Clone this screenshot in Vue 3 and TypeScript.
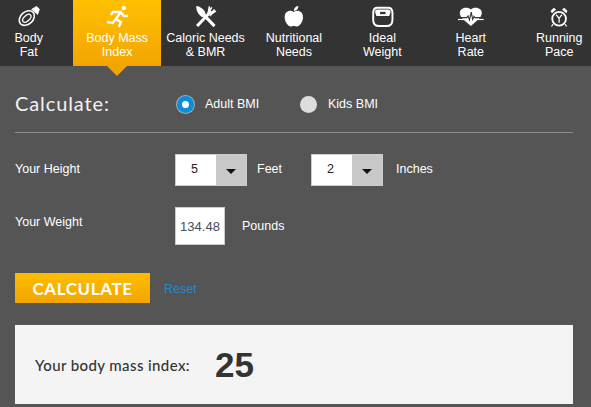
<script setup lang="ts">
const items = [
  { a: 'Body', b: 'Fat', icon: 'fat' },
  { a: 'Body Mass', b: 'Index', icon: 'run', active: true },
  { a: 'Caloric Needs', b: '& BMR', icon: 'food' },
  { a: 'Nutritional', b: 'Needs', icon: 'apple' },
  { a: 'Ideal', b: 'Weight', icon: 'scale' },
  { a: 'Heart', b: 'Rate', icon: 'heart' },
  { a: 'Running', b: 'Pace', icon: 'clock' },
]
</script>

<template>
  <div class="page">
    <nav class="nav">
      <div v-for="it in items" :key="it.a" class="item" :class="{ active: it.active }">
        <svg class="icon" viewBox="-2 0 28 24" aria-hidden="true">
          <g v-if="it.icon === 'fat'">
            <ellipse cx="9.800" cy="14.200" rx="9.300" ry="6.800" transform="rotate(-42 9.800 14.200)" fill="none" stroke="#fff" stroke-width="1.700" />
            <ellipse cx="9.800" cy="14.500" rx="5.400" ry="3" transform="rotate(-42 9.800 14.500)" fill="none" stroke="#fff" stroke-width="1.400" />
            <path d="M14.500 4.500 20.500 1.200 24 4.500 21.800 11z" fill="#fff" />
          </g>
          <g v-else-if="it.icon === 'run'">
            <circle cx="19.600" cy="3.400" r="2.400" fill="#fff" />
            <path d="M5.500 11 7.600 7.600h8.800l3.200 4.400H24M16.400 7.600 10.900 15.300l5.500 3.200L14.200 24M10.900 15.300 7.600 19.600 1.100 18.500" fill="none" stroke="#fff" stroke-width="2.600" stroke-linejoin="miter" />
          </g>
          <g v-else-if="it.icon === 'food'">
            <path d="M2.500 23 18 6.500" stroke="#fff" stroke-width="3.300" />
            <path d="M14.500 9 16 1.500M14.500 9l4-6.500M16.500 11l5-6M16.500 11 23 6.500M14 8l4 4" stroke="#fff" stroke-width="1.700" fill="none" />
            <path d="M21.500 23 9 10" stroke="#fff" stroke-width="3.300" />
            <path d="M1.500 1C7 1.500 11.500 6 12 11L9 13.500C4 11.500 1.500 6.500 1.500 1z" fill="#fff" />
          </g>
          <g v-else-if="it.icon === 'apple'">
            <path d="M12 7.500C8 5 2 6.500 2 13.500c0 5.500 4 10 6.500 10 1.500 0 2-.7 3.500-.7s2 .7 3.500.7c2.500 0 6.500-4.500 6.500-10 0-7-6-8.500-10-6z" fill="#fff" />
            <path d="M12 6.500c0-3 1.500-5 5-5.500 0 3-2 5-5 5.500z" fill="#fff" />
          </g>
          <g v-else-if="it.icon === 'scale'">
            <path d="M6 3h12q4 0 4.500 5v8q0 7-6.500 7H8q-6.500 0-6.500-7V8Q2 3 6 3z" fill="none" stroke="#fff" stroke-width="2.100" />
            <path d="M6 5h12q2.500 0 2.500 2.500L19 12H5L3.500 7.500Q3.500 5 6 5z" fill="#fff" />
            <rect x="9" y="7.500" width="6" height="2.500" fill="#333" />
          </g>
          <g v-else-if="it.icon === 'heart'">
            <path d="M12 23 3.500 15.500C-.5 11.500-1 7.500 1.500 5 4.500 2.500 9.500 2.500 12 5 14.500 2.500 19.500 2.500 22.500 5c2.500 2.500 2 6.500-2 10.500z" fill="#fff" />
            <path d="M-2 15.800H26" stroke="#fff" stroke-width="1.300" />
            <path d="M1 13.800h6.500l1.500-2 1.500 4.500 2-8.500 1.500 8 1.500-3.500 1 1.500H23" fill="none" stroke="#333" stroke-width="1.200" />
          </g>
          <g v-else>
            <circle cx="12.300" cy="15" r="7.500" fill="none" stroke="#fff" stroke-width="2" />
            <path d="M12.300 14.500 9 10.500M12.300 14.500l3-4M12.300 14.500v5" stroke="#fff" stroke-width="1.400" fill="none" />
            <path d="M3 6.500 6.500 3 9 5 4.500 9zM21.500 6.500 18 3 15.500 5 20 9z" fill="#fff" />
            <path d="M5.500 21l-1.500 2.500M19 21l1.500 2.500" stroke="#fff" stroke-width="1.400" />
          </g>
        </svg>
        <span class="lbl">{{ it.a }}<br />{{ it.b }}</span>
      </div>
    </nav>

    <main class="main">
      <div class="head">
        <h1 class="title">Calculate:</h1>
        <label class="radio"><span class="dot on"></span>Adult BMI</label>
        <label class="radio"><span class="dot"></span>Kids BMI</label>
      </div>
      <hr class="rule" />

      <div class="row height">
        <span class="name nudge">Your Height</span>
        <div class="select"><span class="val">5</span><span class="arrow"><i></i></span></div>
        <span class="unit feet nudge">Feet</span>
        <div class="select"><span class="val">2</span><span class="arrow"><i></i></span></div>
        <span class="unit inches nudge">Inches</span>
      </div>

      <div class="row weight">
        <span class="name up">Your Weight</span>
        <div class="input">134.48</div>
        <span class="unit pounds">Pounds</span>
      </div>

      <div class="actions">
        <button class="calc" type="button">CALCULATE</button>
        <a class="reset">Reset</a>
      </div>

      <section class="result">
        <span class="rtext">Your body mass index:</span>
        <strong class="rnum">25</strong>
      </section>
    </main>
  </div>
</template>

<style>
html, body { margin: 0; background: #555; }
</style>

<style scoped>
.page {
  width: 591px;
  height: 407px;
  overflow: hidden;
  background: #555;
  color: #fff;
  font-family: "Liberation Sans", Arial, sans-serif;
  font-size: 12.5px;
}
.nav {
  display: flex;
  width: 619px;
  height: 66px;
  margin-left: -15.5px;
  background: #333;
}
.item {
  position: relative;
  flex: 1 1 0;
  display: flex;
  flex-direction: column;
  align-items: center;
  padding-top: 5px;
  box-sizing: border-box;
  text-align: center;
}
.item.active { background: linear-gradient(#ffc000, #f2a500); }
.item.active::after {
  content: "";
  position: absolute;
  left: 50%;
  top: 66px;
  margin-left: -10px;
  border-left: 10px solid transparent;
  border-right: 10px solid transparent;
  border-top: 10px solid #f2a500;
}
.icon { width: 25.670px; height: 22px; display: block; overflow: visible; }
.lbl { display: block; margin-top: 4px; line-height: 14px; white-space: nowrap; }

.main { padding: 0 18px 0 15px; }
.head { display: flex; align-items: center; height: 38px; padding-top: 19px; }
.title {
  margin: -2px 0 0;
  width: 162px;
  flex: none;
  font-family: Lato, sans-serif;
  font-size: 20px;
  font-weight: 400;
  letter-spacing: .9px;
  color: #f2f2f2;
}
.radio { display: flex; align-items: center; gap: 11px; width: 123px; }
.dot {
  width: 17px;
  height: 17px;
  box-sizing: border-box;
  border-radius: 50%;
  background: #ddd;
}
.dot.on {
  background: #fff;
  border: 5px solid #0b8ed8;
  box-shadow: 0 0 0 1px #aaa;
}
.rule { margin: 9px 0 0; border: 0; border-top: 1px solid #8c8c8c; }

.row { display: flex; align-items: center; }
.height { margin-top: 20px; height: 33px; }
.weight { margin-top: 20px; height: 39px; }
.name { width: 160px; flex: none; }
.name.up { margin-bottom: 7px; }
.nudge { margin-bottom: 2px; }
.select {
  display: flex;
  width: 72px;
  height: 32px;
  box-sizing: border-box;
  border: 1px solid #ccc;
  background: #fff;
  color: #222;
}
.val { width: 37px; padding-right: 3px; text-align: center; line-height: 29px; }
.arrow { flex: 1; background: #c8c8c8; display: flex; align-items: center; justify-content: center; }
.arrow i {
  display: block;
  margin-top: 4px;
  border-left: 5px solid transparent;
  border-right: 5px solid transparent;
  border-top: 5px solid #111;
}
.feet { margin-left: 10px; margin-right: 28px; width: 26px; }
.inches { margin-left: 13px; }
.input {
  width: 50px;
  height: 38px;
  box-sizing: border-box;
  border: 1px solid #ccc;
  background: #fff;
  color: #4a4a5a;
  text-align: center;
  font-size: 13px;
  line-height: 38px;
}
.pounds { margin-left: 17px; margin-top: 1px; }

.actions { display: flex; align-items: center; margin-top: 28px; }
.calc {
  width: 135px;
  height: 30px;
  padding: 0;
  border: 0;
  background: linear-gradient(#ffbe00, #f2a500);
  color: #fff;
  font-family: Lato, sans-serif;
  font-size: 17px;
  font-weight: 700;
  letter-spacing: .6px;
}
.reset { margin-left: 14px; margin-top: 1px; color: #1b8bd6; }

.result {
  display: flex;
  align-items: center;
  height: 79px;
  margin-top: 22px;
  padding-left: 20px;
  background: #f4f4f4;
  color: #333;
}
.rtext { width: 180px; font-family: Lato, sans-serif; font-size: 15px; font-weight: 500; letter-spacing: .4px; }
.rnum { font-size: 35px; font-weight: 700; }
</style>
